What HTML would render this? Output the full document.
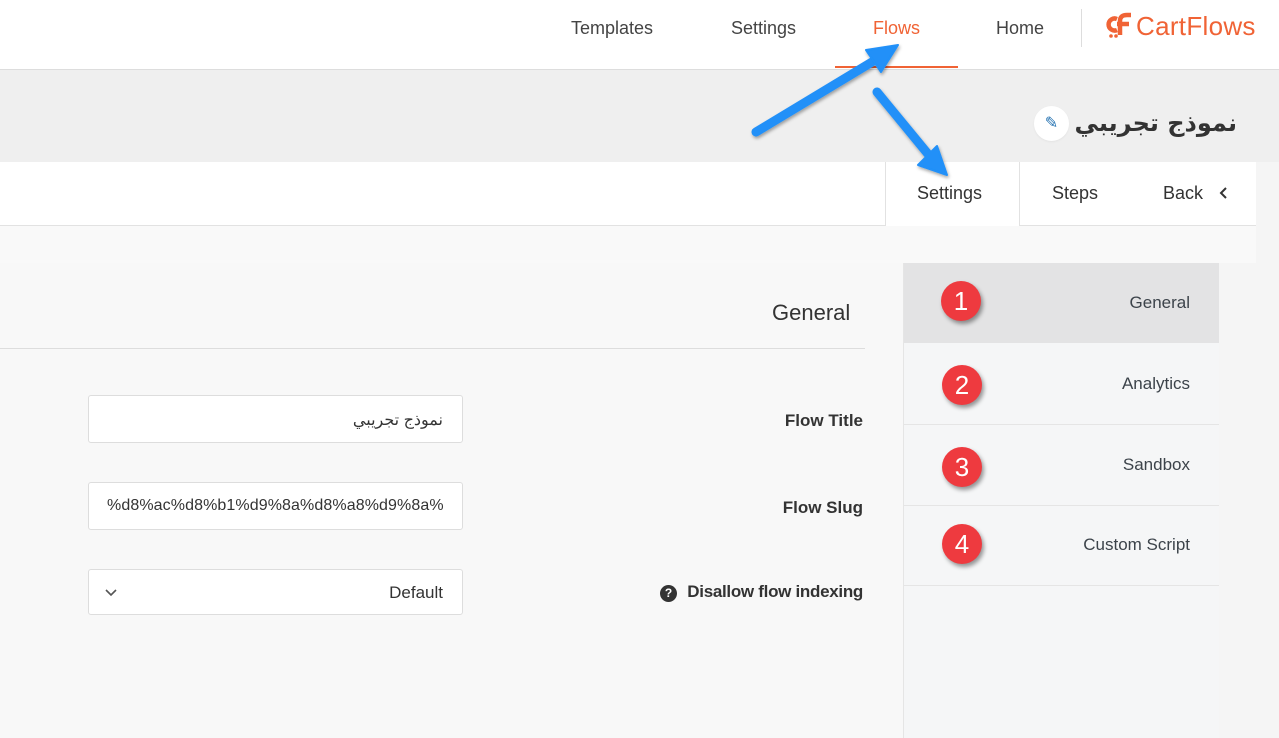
<!DOCTYPE html>
<html><head><meta charset="utf-8"><style>
body{margin:0;width:1279px;height:738px;overflow:hidden;background:#f5f5f5;font-family:"Liberation Sans","Noto Sans CJK SC",sans-serif;position:relative;color:#3c434a}
.a{position:absolute}
.nav{font-size:18px;color:#444;top:18px}
.b{position:absolute;width:40px;height:40px;border-radius:50%;background:#ee3a3f;color:#fff;font-size:26px;text-align:center;line-height:40px;box-shadow:2px 3px 4px rgba(0,0,0,.4)}
</style></head><body>
<div class="a" style="left:0;top:0;width:1279px;height:69px;background:#fff;border-bottom:1px solid #ddd"></div>
<div class="a" style="left:0;top:70px;width:1279px;height:92px;background:#efefef"></div>
<div class="a nav" style="left:571px">Templates</div>
<div class="a nav" style="left:731px">Settings</div>
<div class="a nav" style="left:873px;color:#f06335">Flows</div>
<div class="a nav" style="left:996px">Home</div>
<div class="a" style="left:835px;top:66px;width:123px;height:2px;background:#f06335"></div>
<div class="a" style="left:1081px;top:9px;width:1px;height:38px;background:#ddd"></div>
<svg class="a" style="left:1105px;top:12px" width="28" height="26" viewBox="0 0 28 26"><path d="M12 7 A6 6 0 1 0 12 18" stroke="#f06335" stroke-width="4.5" fill="none"/><path d="M15 23 L15 9 Q15 3 22 3 L26 3 M12 12 L24 12" stroke="#f06335" stroke-width="4.5" fill="none"/><circle cx="6" cy="24" r="1.8" fill="#f06335"/><circle cx="11" cy="24" r="1.8" fill="#f06335"/></svg>
<div class="a" style="left:1136px;top:11px;font-size:26px;color:#f06335;letter-spacing:0.3px">CartFlows</div>
<div class="a" style="right:42px;top:109px;font-size:24px;color:#333;direction:rtl;white-space:nowrap;font-family:'DejaVu Sans',sans-serif;font-weight:bold;letter-spacing:-0.5px">نموذج تجريبي</div>
<div class="a" style="left:1034px;top:106px;width:35px;height:35px;border-radius:50%;background:#fff;color:#2271b1;font-size:16px;text-align:center;line-height:35px;box-shadow:0 1px 2px rgba(0,0,0,.05)">✎</div>
<div class="a" style="left:0;top:162px;width:1256px;height:63px;background:#fff;border-bottom:1px solid #e2e2e2"></div>
<div class="a" style="left:0;top:226px;width:1256px;height:37px;background:#f9f9f9"></div>
<div class="a" style="left:885px;top:162px;width:133px;height:64px;background:#fff;border-left:1px solid #e2e2e2;border-right:1px solid #e2e2e2"></div>
<div class="a" style="left:917px;top:183px;font-size:18px;color:#333">Settings</div>
<div class="a" style="left:1052px;top:183px;font-size:18px;color:#333">Steps</div>
<div class="a" style="left:1163px;top:183px;font-size:18px;color:#333">Back</div>
<svg class="a" style="left:1219px;top:187px" width="10" height="12"><path d="M7 1L2 6l5 5" stroke="#333" stroke-width="2" fill="none"/></svg>
<div class="a" style="left:0;top:263px;width:903px;height:475px;background:#f8f8f8"></div>
<div class="a" style="left:903px;top:263px;width:315px;height:475px;background:#f5f6f7;border-left:1px solid #e5e5e5"></div>
<div class="a" style="left:904px;top:263px;width:315px;height:80px;background:#e3e3e4"></div>
<div class="a" style="left:904px;top:424px;width:315px;height:1px;background:#e5e5e5"></div>
<div class="a" style="left:904px;top:505px;width:315px;height:1px;background:#e5e5e5"></div>
<div class="a" style="left:904px;top:585px;width:315px;height:1px;background:#e5e5e5"></div>
<div class="a" style="right:89px;top:293px;font-size:17px">General</div>
<div class="a" style="right:89px;top:374px;font-size:17px">Analytics</div>
<div class="a" style="right:89px;top:455px;font-size:17px">Sandbox</div>
<div class="a" style="right:89px;top:535px;font-size:17px">Custom Script</div>
<div class="b" style="left:941px;top:281px">1</div>
<div class="b" style="left:942px;top:365px">2</div>
<div class="b" style="left:942px;top:447px">3</div>
<div class="b" style="left:942px;top:524px">4</div>
<div class="a" style="left:772px;top:300px;font-size:22px;color:#333">General</div>
<div class="a" style="left:0;top:348px;width:865px;height:1px;background:#ddd"></div>
<div class="a" style="right:416px;top:411px;font-size:17px;font-weight:bold;color:#333">Flow Title</div>
<div class="a" style="right:416px;top:498px;font-size:17px;font-weight:bold;color:#333">Flow Slug</div>
<div class="a" style="right:416px;top:582px;font-size:17px;font-weight:bold;color:#333;letter-spacing:-0.3px">Disallow flow indexing</div>
<div class="a" style="left:660px;top:585px;width:17px;height:17px;border-radius:50%;background:#333;color:#fff;font-size:12px;font-weight:bold;text-align:center;line-height:17px">?</div>
<div class="a" style="left:88px;top:395px;width:373px;height:46px;background:#fff;border:1px solid #ddd;border-radius:3px"></div>
<div class="a" style="right:836px;top:410px;font-size:16px;direction:rtl;color:#333">نموذج تجريبي</div>
<div class="a" style="left:88px;top:482px;width:373px;height:46px;background:#fff;border:1px solid #ddd;border-radius:3px"></div>
<div class="a" style="left:107px;top:497px;font-size:16px;color:#333;letter-spacing:0.1px">%d8%ac%d8%b1%d9%8a%d8%a8%d9%8a%</div>
<div class="a" style="left:88px;top:569px;width:373px;height:44px;background:#fff;border:1px solid #ddd;border-radius:3px"></div>
<div class="a" style="right:836px;top:583px;font-size:17px;color:#333">Default</div>
<svg class="a" style="left:104px;top:588px" width="14" height="10"><path d="M2 2l5 5 5-5" stroke="#555" stroke-width="1.6" fill="none"/></svg>
<svg class="a" style="left:0;top:0" width="1279" height="738">
<defs><filter id="s"><feDropShadow dx="1" dy="2" stdDeviation="1.5" flood-opacity=".35"/></filter></defs>
<g filter="url(#s)" fill="#2090f8" stroke="#2090f8" stroke-linecap="round">
<line x1="756" y1="132" x2="872" y2="62" stroke-width="9"/>
<polygon points="898,45 866,50 881,72" stroke-width="2" stroke-linejoin="round"/>
<line x1="877" y1="92" x2="928" y2="154" stroke-width="9"/>
<polygon points="947,175 918,165 937,146" stroke-width="2" stroke-linejoin="round"/>
</g></svg>
</body></html>
